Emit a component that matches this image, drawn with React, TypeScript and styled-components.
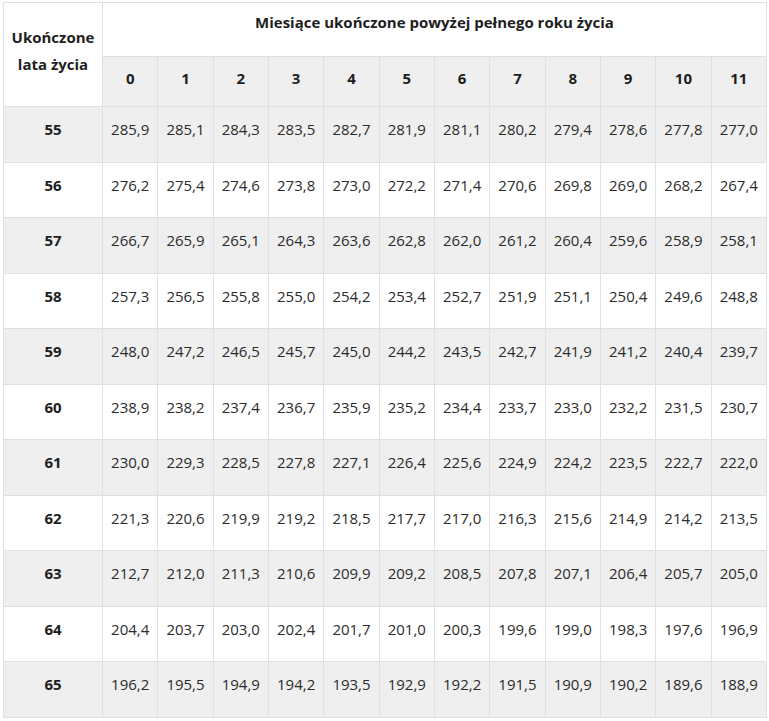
import styled, { createGlobalStyle } from "styled-components";

const GlobalStyle = createGlobalStyle`
    html, body {
        margin: 0;
        padding: 0;
        background: #fff;
    }
    body {
        font-family: "Open Sans", "Noto Sans", sans-serif;
    }
`;

const MONTHS = [0, 1, 2, 3, 4, 5, 6, 7, 8, 9, 10, 11];

// wartości w miesiącach dla wieku 55-65
const ROWS: [number, string[]][] = [
    [55, ["285,9", "285,1", "284,3", "283,5", "282,7", "281,9", "281,1", "280,2", "279,4", "278,6", "277,8", "277,0"]],
    [56, ["276,2", "275,4", "274,6", "273,8", "273,0", "272,2", "271,4", "270,6", "269,8", "269,0", "268,2", "267,4"]],
    [57, ["266,7", "265,9", "265,1", "264,3", "263,6", "262,8", "262,0", "261,2", "260,4", "259,6", "258,9", "258,1"]],
    [58, ["257,3", "256,5", "255,8", "255,0", "254,2", "253,4", "252,7", "251,9", "251,1", "250,4", "249,6", "248,8"]],
    [59, ["248,0", "247,2", "246,5", "245,7", "245,0", "244,2", "243,5", "242,7", "241,9", "241,2", "240,4", "239,7"]],
    [60, ["238,9", "238,2", "237,4", "236,7", "235,9", "235,2", "234,4", "233,7", "233,0", "232,2", "231,5", "230,7"]],
    [61, ["230,0", "229,3", "228,5", "227,8", "227,1", "226,4", "225,6", "224,9", "224,2", "223,5", "222,7", "222,0"]],
    [62, ["221,3", "220,6", "219,9", "219,2", "218,5", "217,7", "217,0", "216,3", "215,6", "214,9", "214,2", "213,5"]],
    [63, ["212,7", "212,0", "211,3", "210,6", "209,9", "209,2", "208,5", "207,8", "207,1", "206,4", "205,7", "205,0"]],
    [64, ["204,4", "203,7", "203,0", "202,4", "201,7", "201,0", "200,3", "199,6", "199,0", "198,3", "197,6", "196,9"]],
    [65, ["196,2", "195,5", "194,9", "194,2", "193,5", "192,9", "192,2", "191,5", "190,9", "190,2", "189,6", "188,9"]],
];

const Page = styled.div`
    padding: 2px 0 0 3px;
`;

const Table = styled.table`
    width: 764px;
    border-collapse: collapse;
    table-layout: fixed;
    font-size: 15px;
    line-height: 22px;
    color: #2b2b2b;
`;

const HeadCell = styled.th<{ $gray?: boolean }>`
    border: 1px solid #e0e0e0;
    background: ${p => (p.$gray ? "#efefef" : "#fff")};
    color: #1e1e1e;
    font-weight: 700;
    text-align: center;
    vertical-align: top;
    padding: 0;
`;

const CornerCell = styled(HeadCell)`
    width: 98px;
    line-height: 27px;
    padding-top: 21px;
`;

const TitleCell = styled(HeadCell)`
    height: 54px;
    padding-top: 8px;
    box-sizing: border-box;
`;

const MonthCell = styled(HeadCell)`
    height: 50px;
    padding-top: 10px;
    box-sizing: border-box;
`;

const Row = styled.tr<{ $gray: boolean }>`
    background: ${p => (p.$gray ? "#efefef" : "#fff")};
`;

const AgeCell = styled.td`
    border: 1px solid #e0e0e0;
    font-weight: 700;
    color: #1e1e1e;
    text-align: center;
    vertical-align: top;
    height: 55.5px;
    box-sizing: border-box;
    padding: 11px 0 0;
`;

const ValueCell = styled.td`
    border: 1px solid #e0e0e0;
    text-align: center;
    vertical-align: top;
    height: 55.5px;
    box-sizing: border-box;
    padding: 11px 0 0;
    white-space: nowrap;
`;

function App() {
    return (
        <Page>
            <GlobalStyle />
            <Table>
                <thead>
                    <tr>
                        <CornerCell rowSpan={2}>
                            Ukończone
                            <br />
                            lata życia
                        </CornerCell>
                        <TitleCell colSpan={12}>Miesiące ukończone powyżej pełnego roku życia</TitleCell>
                    </tr>
                    <tr>
                        {MONTHS.map(m => (
                            <MonthCell key={m} $gray>
                                {m}
                            </MonthCell>
                        ))}
                    </tr>
                </thead>
                <tbody>
                    {ROWS.map(([age, values], i) => (
                        <Row key={age} $gray={i % 2 === 0}>
                            <AgeCell>{age}</AgeCell>
                            {values.map((v, j) => (
                                <ValueCell key={j}>{v}</ValueCell>
                            ))}
                        </Row>
                    ))}
                </tbody>
            </Table>
        </Page>
    );
}

export default App;
